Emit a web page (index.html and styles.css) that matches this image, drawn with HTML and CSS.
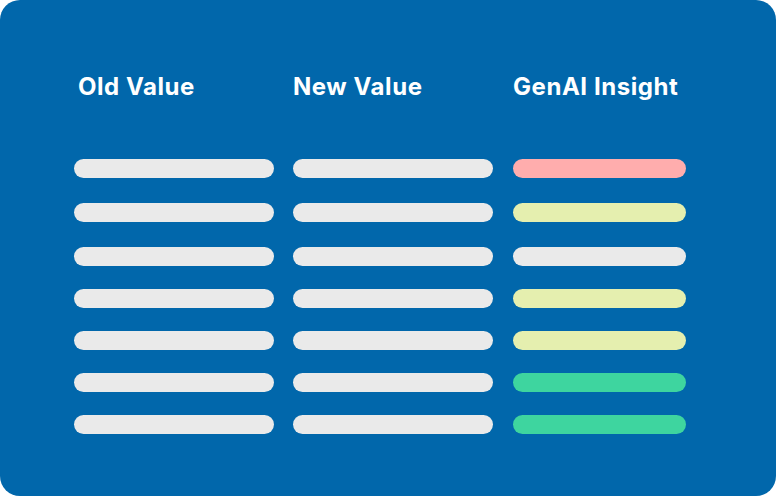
FILE: index.html
```html
<!DOCTYPE html>
<html lang="en">
<head>
<meta charset="utf-8">
<title>GenAI Insight</title>
<link rel="stylesheet" href="styles.css">
</head>
<body>
<div class="card">
  <div class="head">
    <div class="col-title first">Old Value</div>
    <div class="col-title">New Value</div>
    <div class="col-title insight">GenAI Insight</div>
  </div>
  <div class="rows">
    <div class="row wide"><span class="bar"></span><span class="bar"></span><span class="bar insight red"></span></div>
    <div class="row wide"><span class="bar"></span><span class="bar"></span><span class="bar insight yellow"></span></div>
    <div class="row"><span class="bar"></span><span class="bar"></span><span class="bar insight"></span></div>
    <div class="row"><span class="bar"></span><span class="bar"></span><span class="bar insight yellow"></span></div>
    <div class="row"><span class="bar"></span><span class="bar"></span><span class="bar insight yellow"></span></div>
    <div class="row"><span class="bar"></span><span class="bar"></span><span class="bar insight green"></span></div>
    <div class="row"><span class="bar"></span><span class="bar"></span><span class="bar insight green"></span></div>
  </div>
</div>
</body>
</html>
```

FILE: styles.css
```css
html, body {
  margin: 0;
  padding: 0;
  background: #ffffff;
}
body {
  width: 776px;
  height: 496px;
  font-family: Inter, "Noto Sans", sans-serif;
}
.card {
  box-sizing: border-box;
  width: 776px;
  height: 496px;
  background: #0167ab;
  border-radius: 20px;
  padding: 0 0 0 74px;
}
.head {
  display: grid;
  grid-template-columns: 200px 200px 174px;
  column-gap: 19px;
  padding-top: 72px;
  height: 87px;
  box-sizing: border-box;
}
.col-title {
  color: #ffffff;
  font-size: 24px;
  font-weight: 700;
  line-height: 29px;
  letter-spacing: 0.55px;
  white-space: nowrap;
}
.col-title.first {
  padding-left: 4px;
}
.col-title.insight {
  padding-left: 1px;
}
.rows {
  display: flex;
  flex-direction: column;
  gap: 23.33px;
  padding-top: 72.3px;
}
.row {
  display: grid;
  grid-template-columns: 200px 200px 174px;
  column-gap: 19px;
}
.row.wide {
  margin-bottom: 2px;
}
.bar {
  display: block;
  height: 18.67px;
  border-radius: 10px;
  background: #eaeaea;
}
.bar.insight { margin-left: 1px; }
.bar.red { background: #ffadad; }
.bar.yellow { background: #e5efaf; }
.bar.green { background: #3ed59f; }
```
